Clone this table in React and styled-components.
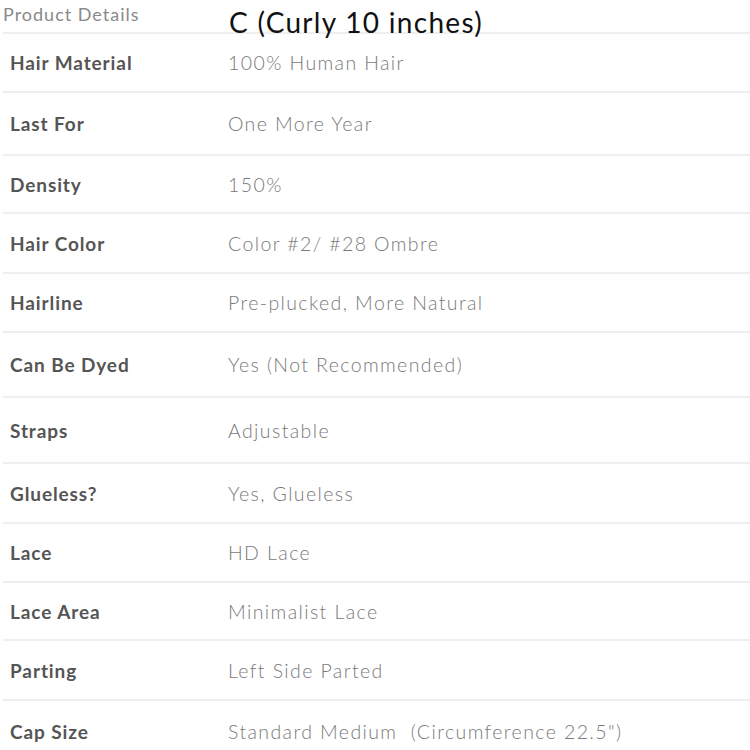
import React from "react";
import styled, { createGlobalStyle } from "styled-components";

const Global = createGlobalStyle`
  html, body { margin: 0; padding: 0; background: #fff; }
  body { font-family: Lato, "Noto Sans", sans-serif; }
`;

const Page = styled.div`
  width: 750px;
  height: 750px;
  overflow: hidden;
  padding-left: 3px;
  box-sizing: border-box;
`;

const Header = styled.div`
  display: grid;
  grid-template-columns: 226px 1fr;
  height: 32px;
  align-items: start;
`;

const Caption = styled.div`
  font-size: 18px;
  color: #8a8a8a;
  font-weight: 400;
  line-height: 1;
  padding-top: 5px;
  letter-spacing: 1px;
`;

const Title = styled.div`
  font-size: 28px;
  color: #111;
  line-height: 1;
  padding-top: 8px;
  white-space: nowrap;
  letter-spacing: 1.3px;
  position: relative;
  z-index: 1;
`;

const Row = styled.div`
  display: grid;
  grid-template-columns: 218px 1fr;
  align-items: center;
  padding-left: 7px;
  box-sizing: border-box;
  height: ${(p) => p.$h}px;
  border-top: 2px solid #efefef;
`;

const Label = styled.div`
  font-size: 19px;
  font-weight: 700;
  color: #555;
  letter-spacing: 0.9px;
  white-space: nowrap;
`;

const Value = styled.div`
  font-size: 19.5px;
  font-weight: 300;
  color: #7a7a7a;
  letter-spacing: 1.4px;
  white-space: pre;
`;

const rows = [
  ["Hair Material", "100% Human Hair", 59],
  ["Last For", "One More Year", 63],
  ["Density", "150%", 58],
  ["Hair Color", "Color #2/ #28 Ombre", 60],
  ["Hairline", "Pre-plucked, More Natural", 59],
  ["Can Be Dyed", "Yes (Not Recommended)", 65],
  ["Straps", "Adjustable", 66],
  ["Glueless?", "Yes, Glueless", 60],
  ["Lace", "HD Lace", 59],
  ["Lace Area", "Minimalist Lace", 58],
  ["Parting", "Left Side Parted", 60],
  ["Cap Size", 'Standard Medium  (Circumference 22.5")', 62],
];

export default function App() {
  return (
    <Page>
      <Global />
      <Header>
        <Caption>Product Details</Caption>
        <Title>C (Curly 10 inches)</Title>
      </Header>
      {rows.map(([l, v, h]) => (
        <Row key={l} $h={h}>
          <Label>{l}</Label>
          <Value>{v}</Value>
        </Row>
      ))}
    </Page>
  );
}
